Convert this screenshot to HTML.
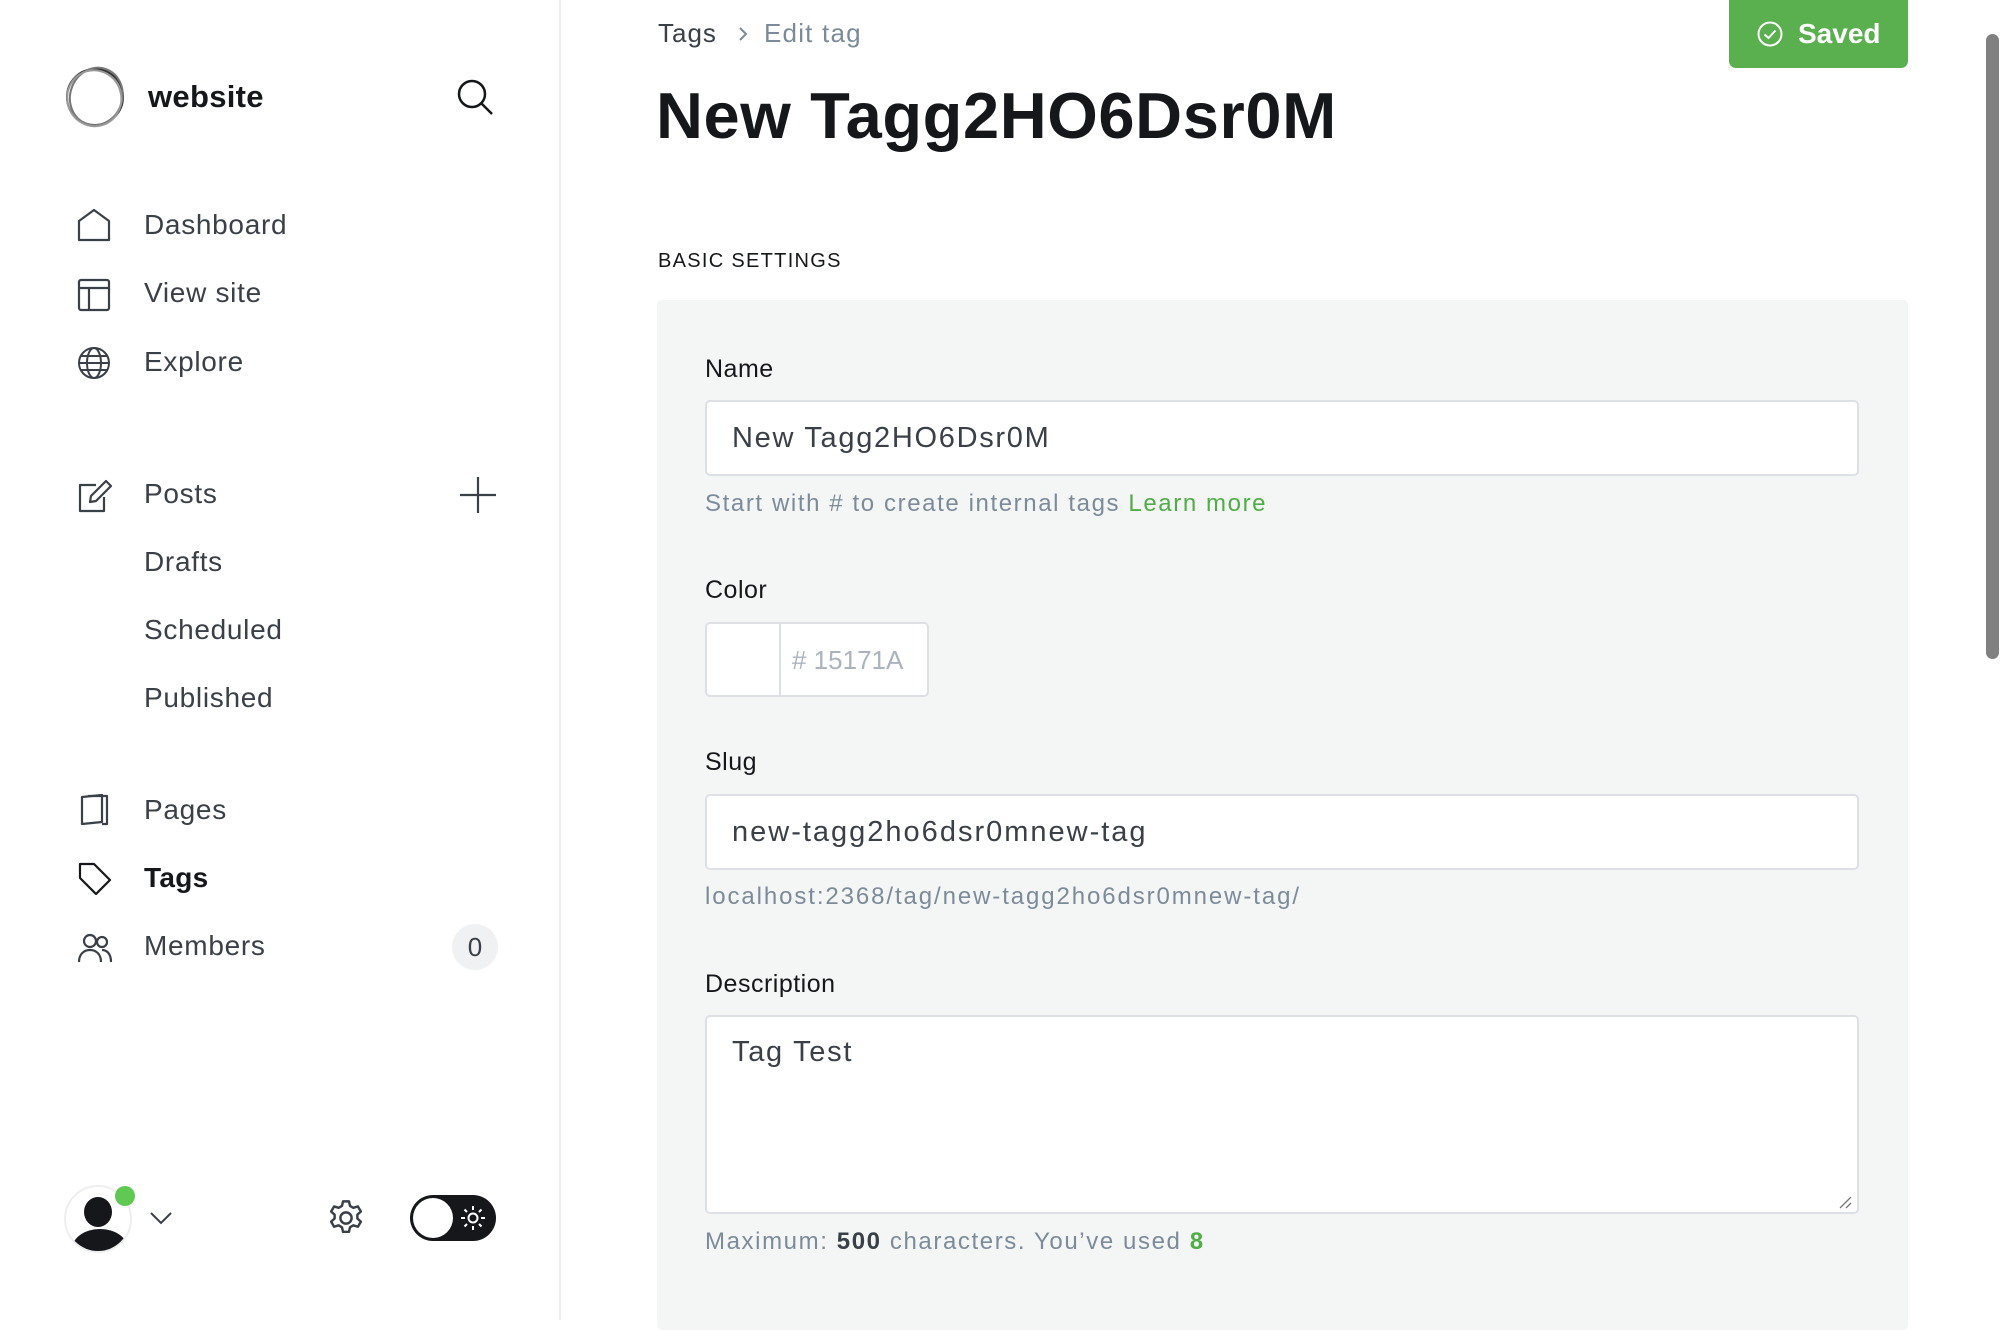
<!DOCTYPE html>
<html><head><meta charset="utf-8"><style>
*{margin:0;padding:0;box-sizing:border-box}
body{width:2000px;height:1320px;overflow:hidden;background:#fff;font-family:"Liberation Sans",sans-serif;position:relative;color:#15171a}
.a{position:absolute;white-space:nowrap}
.c{height:40px;line-height:40px}
.nav{font-size:28px;color:#394047;left:144px;letter-spacing:0.7px}
svg{position:absolute;overflow:visible}
.lbl{font-size:25px;color:#15171a;left:705px;letter-spacing:0.5px}
.inp{position:absolute;left:705px;width:1154px;background:#fff;border:2px solid #dde1e5;border-radius:5px;font-size:29px;color:#394047;padding-left:25px;letter-spacing:1.7px}
.hint{font-size:24px;color:#7c8b9a;left:705px;letter-spacing:1.6px}
</style></head><body>
<div class="a" style="left:559px;top:0;width:2px;height:1320px;background:#ebeef0"></div>

<svg style="left:64px;top:66px" width="62" height="62" viewBox="0 0 62 62" fill="none" stroke="#333" stroke-width="2"><ellipse cx="31" cy="31" rx="28" ry="28"/><ellipse cx="32" cy="30" rx="26" ry="29" transform="rotate(20 31 31)" stroke="#777"/><ellipse cx="30" cy="32" rx="27" ry="28" transform="rotate(-15 31 31)" stroke="#999"/></svg>
<div class="a" style="left:148px;top:77px;font-size:31px;font-weight:bold;line-height:40px;letter-spacing:0.3px">website</div>
<svg style="left:456px;top:78px" width="40" height="40" viewBox="0 0 40 40" fill="none" stroke="#15171a" stroke-width="2.5"><circle cx="16" cy="16" r="13"/><path d="M25.5 25.5L36 36"/></svg>

<svg style="left:78px;top:209px" width="32" height="32" viewBox="0 0 32 32" fill="none" stroke="#394047" stroke-width="2.2" stroke-linejoin="round"><path d="M1 12L16 1L31 12V31H1Z"/></svg>
<div class="a c nav" style="top:205px">Dashboard</div>
<svg style="left:78px;top:279px" width="32" height="32" viewBox="0 0 32 32" fill="none" stroke="#394047" stroke-width="2.2"><rect x="1" y="1" width="30" height="30" rx="2"/><path d="M1 9H31M11 9V31"/></svg>
<div class="a c nav" style="top:273px">View site</div>
<svg style="left:78px;top:347px" width="32" height="32" viewBox="0 0 32 32" fill="none" stroke="#394047" stroke-width="2"><circle cx="16" cy="16" r="15"/><ellipse cx="16" cy="16" rx="7" ry="15"/><path d="M1 16H31M3 9H29M3 23H29"/></svg>
<div class="a c nav" style="top:342px">Explore</div>

<svg style="left:78px;top:479px" width="34" height="34" viewBox="0 0 34 34" fill="none" stroke="#394047" stroke-width="2.2" stroke-linejoin="round"><path d="M18 6H2V32H26V18"/><path d="M28 2L33 7L18 22L12 23L13 17Z"/></svg>
<div class="a c nav" style="top:474px">Posts</div>
<svg style="left:460px;top:477px" width="36" height="36" viewBox="0 0 36 36" stroke="#394047" stroke-width="2.2"><path d="M18 0V36M0 18H36"/></svg>
<div class="a c nav" style="top:542px">Drafts</div>
<div class="a c nav" style="top:610px">Scheduled</div>
<div class="a c nav" style="top:678px">Published</div>

<svg style="left:80px;top:794px" width="30" height="34" viewBox="0 0 30 34" fill="none" stroke="#394047" stroke-width="2.2" stroke-linejoin="round"><path d="M2 3L22 1V28L2 30Z"/><path d="M8 2L27 2V30L22 30"/></svg>
<div class="a c nav" style="top:790px">Pages</div>
<svg style="left:78px;top:862px" width="34" height="34" viewBox="0 0 34 34" fill="none" stroke="#15171a" stroke-width="2.2" stroke-linejoin="round"><path d="M2 2H16L32 18L18 32L2 16Z"/></svg>
<div class="a c nav" style="top:858px;color:#15171a;font-weight:bold;letter-spacing:0.3px">Tags</div>
<svg style="left:78px;top:934px" width="34" height="28" viewBox="0 0 34 28" fill="none" stroke="#394047" stroke-width="2.2"><circle cx="12" cy="7" r="6"/><path d="M1 28C1 20 6 16 12 16S23 20 23 28"/><circle cx="24" cy="8" r="5"/><path d="M24 16C29 16 33 20 33 28"/></svg>
<div class="a c nav" style="top:926px">Members</div>
<div class="a" style="left:452px;top:924px;width:46px;height:46px;border-radius:50%;background:#eff1f2;font-size:26px;color:#394047;text-align:center;line-height:46px">0</div>

<div class="a" style="left:64px;top:1185px;width:68px;height:68px;border-radius:50%;border:2px solid #eee;overflow:hidden;background:#fff">
 <div class="a" style="left:18px;top:10px;width:28px;height:30px;border-radius:50%;background:#15171a"></div>
 <div class="a" style="left:6px;top:42px;width:56px;height:40px;border-radius:50%;background:#15171a"></div>
</div>
<div class="a" style="left:115px;top:1186px;width:20px;height:20px;border-radius:50%;background:#5fc954"></div>
<svg style="left:150px;top:1212px" width="22" height="12" viewBox="0 0 22 12" fill="none" stroke="#394047" stroke-width="2"><path d="M1 1L11 11L21 1"/></svg>
<svg style="left:325px;top:1197px" width="42" height="42" viewBox="0 0 24 24" fill="none" stroke="#394047" stroke-width="1.4" stroke-linejoin="round"><circle cx="12" cy="12" r="3.2"/><path d="M10.3 2.5h3.4l.6 2.6 1.9 1.1 2.6-.8 1.7 2.9-2 1.8v2.2l2 1.8-1.7 2.9-2.6-.8-1.9 1.1-.6 2.6h-3.4l-.6-2.6-1.9-1.1-2.6.8-1.7-2.9 2-1.8v-2.2l-2-1.8 1.7-2.9 2.6.8 1.9-1.1z"/></svg>
<div class="a" style="left:410px;top:1195px;width:86px;height:46px;border-radius:23px;background:#15171a"></div>
<div class="a" style="left:413px;top:1198px;width:40px;height:40px;border-radius:50%;background:#fff"></div>
<svg style="left:460px;top:1205px" width="26" height="26" viewBox="0 0 26 26" stroke="#fff" stroke-width="2" fill="none"><circle cx="13" cy="13" r="4.5"/><path d="M13 1V5M13 21V25M1 13H5M21 13H25M4.5 4.5L7 7M19 19L21.5 21.5M4.5 21.5L7 19M19 7L21.5 4.5"/></svg>

<div class="a c" style="left:658px;top:13px;font-size:26px;color:#394047;letter-spacing:1px">Tags</div>
<svg style="left:738px;top:27px" width="10" height="14" viewBox="0 0 10 14" fill="none" stroke="#7c8b9a" stroke-width="2"><path d="M2 1L8 7L2 13"/></svg>
<div class="a c" style="left:764px;top:13px;font-size:26px;color:#7c8b9a;letter-spacing:1.2px">Edit tag</div>
<div class="a" style="left:656px;top:76px;font-size:65px;font-weight:bold;line-height:80px;letter-spacing:0.6px">New Tagg2HO6Dsr0M</div>

<div class="a" style="left:1729px;top:0;width:179px;height:68px;background:#5aaf4f;border-radius:0 0 7px 7px"></div>
<svg style="left:1757px;top:21px" width="26" height="26" viewBox="0 0 26 26" fill="none" stroke="#fff" stroke-width="2"><circle cx="13" cy="13" r="11.5"/><path d="M7.5 13.5L11.5 17L18.5 9.5"/></svg>
<div class="a c" style="left:1798px;top:14px;font-size:28px;font-weight:bold;color:#fff">Saved</div>

<div class="a" style="left:1986px;top:34px;width:13px;height:625px;border-radius:7px;background:#808080"></div>

<div class="a c" style="left:658px;top:241px;font-size:20px;letter-spacing:1.3px;color:#15171a">BASIC SETTINGS</div>

<div class="a" style="left:657px;top:300px;width:1251px;height:1030px;background:#f4f5f5;border-radius:5px"></div>

<div class="a c lbl" style="top:349px">Name</div>
<div class="inp" style="top:400px;height:76px;line-height:72px">New Tagg2HO6Dsr0M</div>
<div class="a c hint" style="top:484px">Start with # to create internal tags <span style="color:#4fae45">Learn more</span></div>

<div class="a c lbl" style="top:570px">Color</div>
<div class="a" style="left:705px;top:622px;width:224px;height:75px;background:#fff;border:2px solid #dde1e5;border-radius:5px"></div>
<div class="a" style="left:779px;top:623px;width:2px;height:73px;background:#dde1e5"></div>
<div class="a c" style="left:792px;top:640px;font-size:26px;color:#abb4be">#&nbsp;15171A</div>

<div class="a c lbl" style="top:742px">Slug</div>
<div class="inp" style="top:794px;height:76px;line-height:72px;letter-spacing:2px">new-tagg2ho6dsr0mnew-tag</div>
<div class="a c hint" style="top:877px;letter-spacing:1.9px">localhost:2368/tag/new-tagg2ho6dsr0mnew-tag/</div>

<div class="a c lbl" style="top:964px">Description</div>
<div class="inp" style="top:1015px;height:199px;line-height:40px;padding-top:15px">Tag Test</div>
<svg style="left:1838px;top:1195px" width="14" height="14" viewBox="0 0 14 14" stroke="#777" stroke-width="1.3"><path d="M13 2L2 13M13 8L8 13"/></svg>
<div class="a c hint" style="top:1222px">Maximum: <b style="color:#394047">500</b> characters. You’ve used <b style="color:#4fae45">8</b></div>
</body></html>
